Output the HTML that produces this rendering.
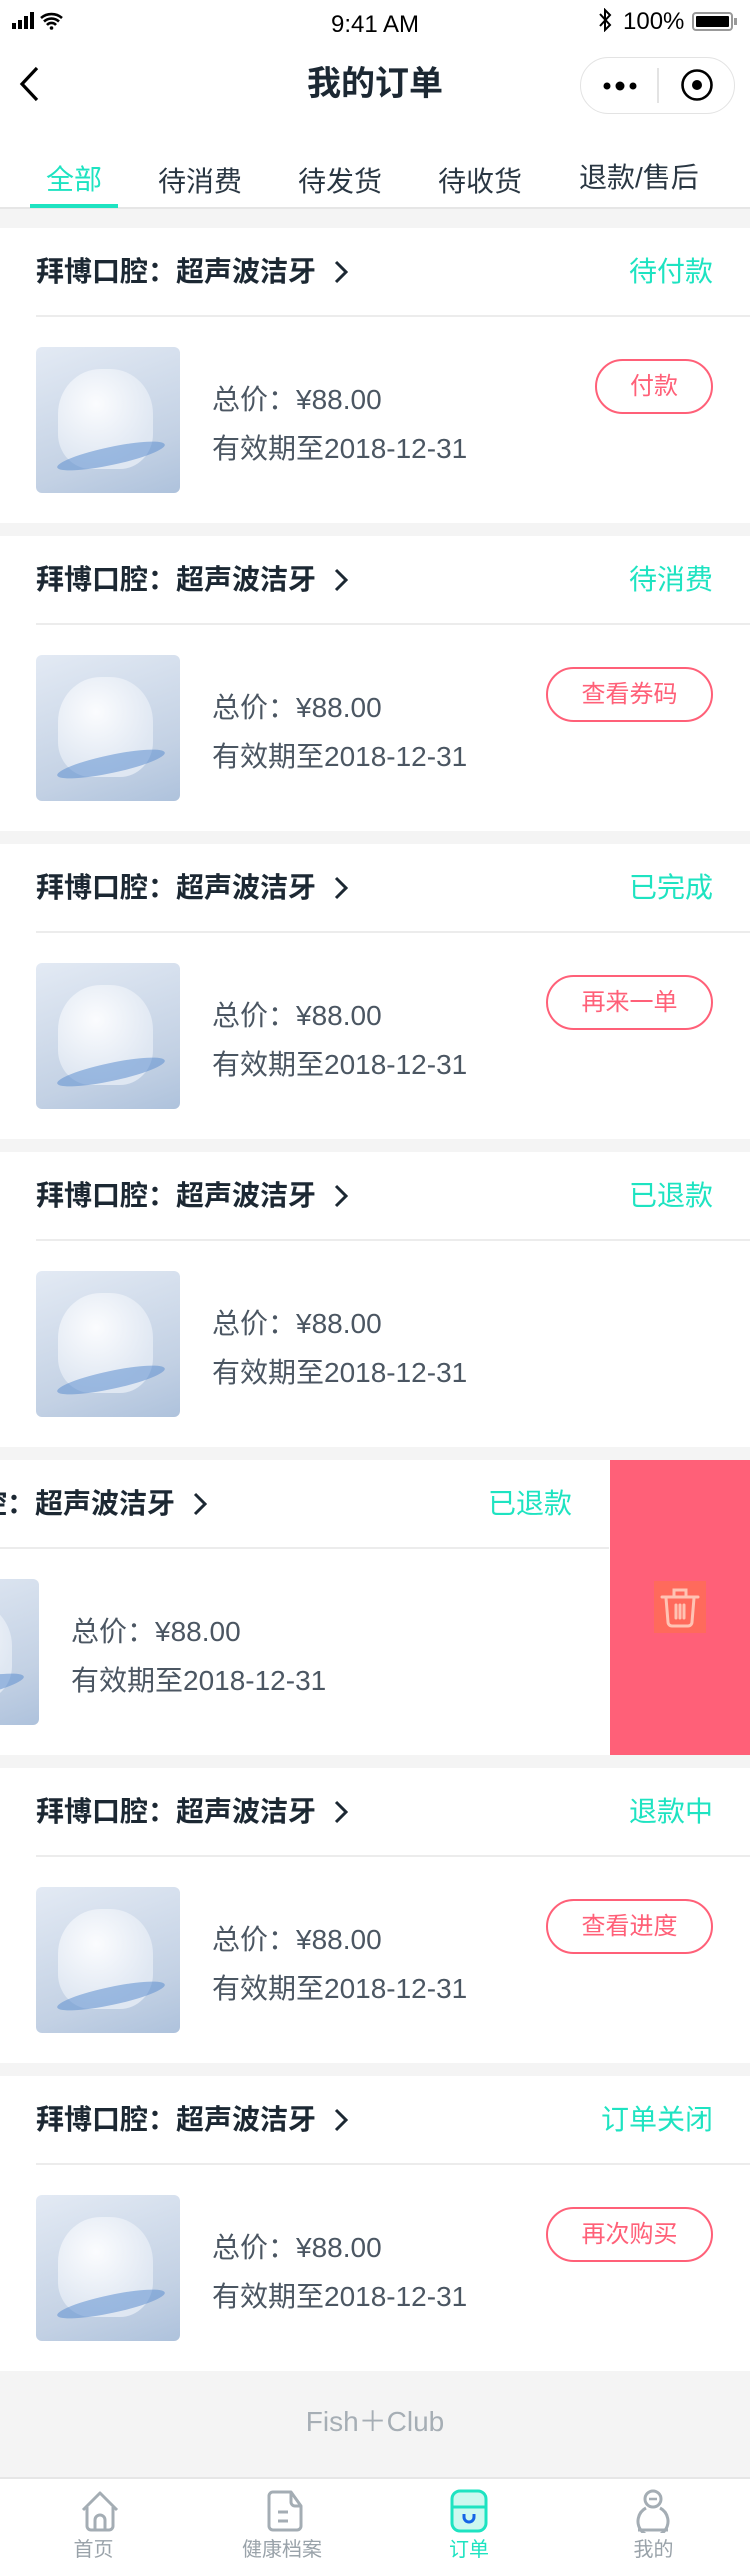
<!DOCTYPE html>
<html><head><meta charset="utf-8"><style>
*{margin:0;padding:0;box-sizing:border-box}
body{width:750px;height:2564px;background:#f4f4f4;font-family:"Liberation Sans","Noto Sans CJK SC",sans-serif;position:relative;overflow:hidden}
.abs{position:absolute}
.top{position:absolute;left:0;top:0;width:750px;height:209px;background:#fff;border-bottom:2px solid #e6e6e6}
.card{position:absolute;left:0;width:750px;height:295px;background:#fff;overflow:hidden}
.in{position:absolute;left:0;top:0;width:750px;height:295px}
.ttl{position:absolute;left:36px;top:26px;font-size:28px;line-height:36px;color:#1c2833;font-weight:bold;white-space:nowrap}
.ttl svg{vertical-align:middle;margin-left:18px;margin-top:-4px}
.st{position:absolute;right:37px;top:26px;font-size:28px;line-height:36px;color:#1ee3c1}
.dv{position:absolute;left:36px;right:0;top:87px;height:2px;background:#ececec}
.img{position:absolute;left:36px;top:119px;width:144px;height:146px;border-radius:6px;overflow:hidden;background:linear-gradient(160deg,#e3eaf4,#c3d1e4 70%,#aec2dc)}
.img:before{content:"";position:absolute;left:22px;top:22px;width:95px;height:100px;border-radius:45% 45% 35% 35%;background:radial-gradient(circle at 40% 35%,#fbfcfe,#dfe7f2 70%)}
.img:after{content:"";position:absolute;left:20px;top:100px;width:110px;height:18px;border-radius:50%;background:#5f8fd0;opacity:.55;transform:rotate(-12deg)}
.p1{position:absolute;left:212px;top:154px;font-size:28px;line-height:36px;color:#4b5662}
.p2{position:absolute;left:212px;top:203px;font-size:28px;line-height:36px;color:#4b5662}
.btn{position:absolute;right:37px;top:131px;height:55px;border:2px solid #ff6078;border-radius:28px;color:#ff6078;font-size:24px;line-height:51px;text-align:center}
</style></head><body>
<div class="top">
 <svg class="abs" style="left:12px;top:12px" width="62" height="18" viewBox="0 0 62 18"><rect x="0" y="11" width="4" height="6" fill="#000"/><rect x="6" y="8" width="4" height="9" fill="#000"/><rect x="12" y="4" width="4" height="13" fill="#000"/><rect x="18" y="0" width="4" height="17" fill="#000"/><path d="M29 6a16 16 0 0 1 21 0M32 9.5a11 11 0 0 1 15 0M35 13a6 6 0 0 1 9 0" stroke="#000" stroke-width="2.6" fill="none"/><circle cx="39.5" cy="16" r="1.8" fill="#000"/></svg>
 <div class="abs" style="left:0;width:750px;top:10px;text-align:center;font-size:24px;line-height:30px;color:#000">9:41 AM</div>
 <svg class="abs" style="left:598px;top:8px" width="14" height="24" viewBox="0 0 14 24"><path d="M2 6l10 11-5 5V2l5 5L2 18" stroke="#000" stroke-width="2" fill="none"/></svg>
 <div class="abs" style="left:623px;top:8px;font-size:24px;line-height:28px;color:#000">100%</div>
 <div class="abs" style="left:692px;top:12px;width:41px;height:19px;border:2px solid #999;border-radius:4px;padding:2px"><div style="width:100%;height:100%;background:#000;border-radius:1px"></div></div>
 <div class="abs" style="left:734px;top:18px;width:3px;height:7px;background:#999"></div>
 <svg class="abs" style="left:18px;top:66px" width="24" height="36" viewBox="0 0 24 36"><path d="M19 2L4 18l15 16" stroke="#000" stroke-width="3.2" fill="none"/></svg>
 <div class="abs" style="left:0;width:750px;top:62px;text-align:center;font-size:34px;line-height:44px;color:#1c2833;font-weight:bold">我的订单</div>
 <div class="abs" style="left:580px;top:57px;width:155px;height:57px;border:1.5px solid #e3e3e3;border-radius:29px"></div>
 <svg class="abs" style="left:601px;top:78px" width="40" height="16"><circle cx="6" cy="8" r="3.5" fill="#000"/><circle cx="19" cy="8" r="4.5" fill="#000"/><circle cx="32" cy="8" r="3.5" fill="#000"/></svg>
 <div class="abs" style="left:657px;top:68px;width:1.5px;height:35px;background:#e3e3e3"></div>
 <svg class="abs" style="left:680px;top:68px" width="34" height="34"><circle cx="17" cy="17" r="14.5" stroke="#000" stroke-width="2.6" fill="none"/><circle cx="17" cy="17" r="5" fill="#000"/></svg>
 <div class="abs" style="left:46px;top:162px;font-size:28px;line-height:36px;color:#1ee3c1">全部</div>
 <div class="abs" style="left:158px;top:164px;font-size:28px;line-height:36px;color:#2a3743">待消费</div>
 <div class="abs" style="left:298px;top:164px;font-size:28px;line-height:36px;color:#2a3743">待发货</div>
 <div class="abs" style="left:438px;top:164px;font-size:28px;line-height:36px;color:#2a3743">待收货</div>
 <div class="abs" style="left:579px;top:160px;font-size:28px;line-height:36px;color:#2a3743">退款/售后</div>
 <div class="abs" style="left:30px;top:204px;width:88px;height:4px;background:#1ee3c1"></div>
</div>

<div class="card" style="top:228px"><div class="in">
<div class="ttl">拜博口腔：超声波洁牙<svg width="14" height="24" viewBox="0 0 14 24"><path d="M2 2l10 10L2 22" stroke="#1c2833" stroke-width="3" fill="none"/></svg></div>
<div class="st">待付款</div><div class="dv"></div><div class="img"></div>
<div class="p1">总价：¥88.00</div><div class="p2">有效期至2018-12-31</div>
<div class="btn" style="width:118px">付款</div></div></div>

<div class="card" style="top:536px"><div class="in">
<div class="ttl">拜博口腔：超声波洁牙<svg width="14" height="24" viewBox="0 0 14 24"><path d="M2 2l10 10L2 22" stroke="#1c2833" stroke-width="3" fill="none"/></svg></div>
<div class="st">待消费</div><div class="dv"></div><div class="img"></div>
<div class="p1">总价：¥88.00</div><div class="p2">有效期至2018-12-31</div>
<div class="btn" style="width:167px">查看券码</div></div></div>

<div class="card" style="top:844px"><div class="in">
<div class="ttl">拜博口腔：超声波洁牙<svg width="14" height="24" viewBox="0 0 14 24"><path d="M2 2l10 10L2 22" stroke="#1c2833" stroke-width="3" fill="none"/></svg></div>
<div class="st">已完成</div><div class="dv"></div><div class="img"></div>
<div class="p1">总价：¥88.00</div><div class="p2">有效期至2018-12-31</div>
<div class="btn" style="width:167px">再来一单</div></div></div>

<div class="card" style="top:1152px"><div class="in">
<div class="ttl">拜博口腔：超声波洁牙<svg width="14" height="24" viewBox="0 0 14 24"><path d="M2 2l10 10L2 22" stroke="#1c2833" stroke-width="3" fill="none"/></svg></div>
<div class="st">已退款</div><div class="dv"></div><div class="img"></div>
<div class="p1">总价：¥88.00</div><div class="p2">有效期至2018-12-31</div></div></div>

<div class="card" style="top:1460px"><div class="in" style="left:-141px">
<div class="ttl">拜博口腔：超声波洁牙<svg width="14" height="24" viewBox="0 0 14 24"><path d="M2 2l10 10L2 22" stroke="#1c2833" stroke-width="3" fill="none"/></svg></div>
<div class="st">已退款</div><div class="dv"></div><div class="img"></div>
<div class="p1">总价：¥88.00</div><div class="p2">有效期至2018-12-31</div></div>
<div class="abs" style="left:610px;top:0;width:140px;height:295px;background:#ff6078"></div>
<div class="abs" style="left:654px;top:121px;width:52px;height:52px;background:#ff6a5c"></div>
<svg class="abs" style="left:658px;top:124px" width="44" height="46" viewBox="0 0 44 46"><path d="M4 13h36M16 12V6h12v6M8 14l2 24a4 4 0 0 0 4 4h16a4 4 0 0 0 4-4l2-24M18 21v13M22 21v13M26 21v13" stroke="#ffc3b3" stroke-width="3" fill="none" stroke-linecap="round"/></svg>
</div>

<div class="card" style="top:1768px"><div class="in">
<div class="ttl">拜博口腔：超声波洁牙<svg width="14" height="24" viewBox="0 0 14 24"><path d="M2 2l10 10L2 22" stroke="#1c2833" stroke-width="3" fill="none"/></svg></div>
<div class="st">退款中</div><div class="dv"></div><div class="img"></div>
<div class="p1">总价：¥88.00</div><div class="p2">有效期至2018-12-31</div>
<div class="btn" style="width:167px">查看进度</div></div></div>

<div class="card" style="top:2076px"><div class="in">
<div class="ttl">拜博口腔：超声波洁牙<svg width="14" height="24" viewBox="0 0 14 24"><path d="M2 2l10 10L2 22" stroke="#1c2833" stroke-width="3" fill="none"/></svg></div>
<div class="st">订单关闭</div><div class="dv"></div><div class="img"></div>
<div class="p1">总价：¥88.00</div><div class="p2">有效期至2018-12-31</div>
<div class="btn" style="width:167px">再次购买</div></div></div>

<div class="abs" style="left:0;width:750px;top:2404px;text-align:center;font-size:28px;line-height:36px;color:#a6aeb5">Fish＋Club</div>

<div class="abs" style="left:0;top:2477px;width:750px;height:87px;background:#fff;border-top:2px solid #e6e6e6">
 <svg class="abs" style="left:80px;top:11px" width="40" height="42" viewBox="0 0 40 42"><path d="M3 20L20 3l17 17M7 17v19a4 4 0 0 0 4 4h18a4 4 0 0 0 4-4V17M15 40V30a5 5 0 0 1 10 0v10" stroke="#a4adb4" stroke-width="3" fill="none" stroke-linejoin="round"/></svg>
 <svg class="abs" style="left:265px;top:11px" width="38" height="42" viewBox="0 0 38 42"><path d="M8 2h18l10 14v20a4 4 0 0 1-4 4H8a4 4 0 0 1-4-4V6a4 4 0 0 1 4-4zM26 2v10a4 4 0 0 0 4 4h6M13 22h10M13 31h10" stroke="#a4adb4" stroke-width="3" fill="none" stroke-linejoin="round"/></svg>
 <svg class="abs" style="left:450px;top:10px" width="38" height="44" viewBox="0 0 38 44"><rect x="2" y="2" width="34" height="40" rx="8" fill="#cdf8ef" stroke="#1ee3c1" stroke-width="3"/><path d="M2 18h34" stroke="#1ee3c1" stroke-width="3"/><path d="M14 25v3a5 5 0 0 0 10 0v-3" stroke="#1565e6" stroke-width="3" fill="none"/></svg>
 <svg class="abs" style="left:634px;top:10px" width="38" height="44" viewBox="0 0 38 44"><circle cx="19" cy="10" r="8" stroke="#a4adb4" stroke-width="3" fill="none"/><path d="M15 10h8" stroke="#a4adb4" stroke-width="2.5"/><path d="M12 19a15 15 0 1 0 14 0" stroke="#a4adb4" stroke-width="3" fill="none"/><path d="M4 41h30" stroke="#a4adb4" stroke-width="3"/></svg>
 <div class="abs" style="left:0;width:187px;top:58px;text-align:center;font-size:20px;line-height:26px;color:#9aa3aa">首页</div>
 <div class="abs" style="left:187px;width:190px;top:58px;text-align:center;font-size:20px;line-height:26px;color:#9aa3aa">健康档案</div>
 <div class="abs" style="left:375px;width:188px;top:58px;text-align:center;font-size:20px;line-height:26px;color:#1ee3c1">订单</div>
 <div class="abs" style="left:560px;width:187px;top:58px;text-align:center;font-size:20px;line-height:26px;color:#9aa3aa">我的</div>
</div>
</body></html>
